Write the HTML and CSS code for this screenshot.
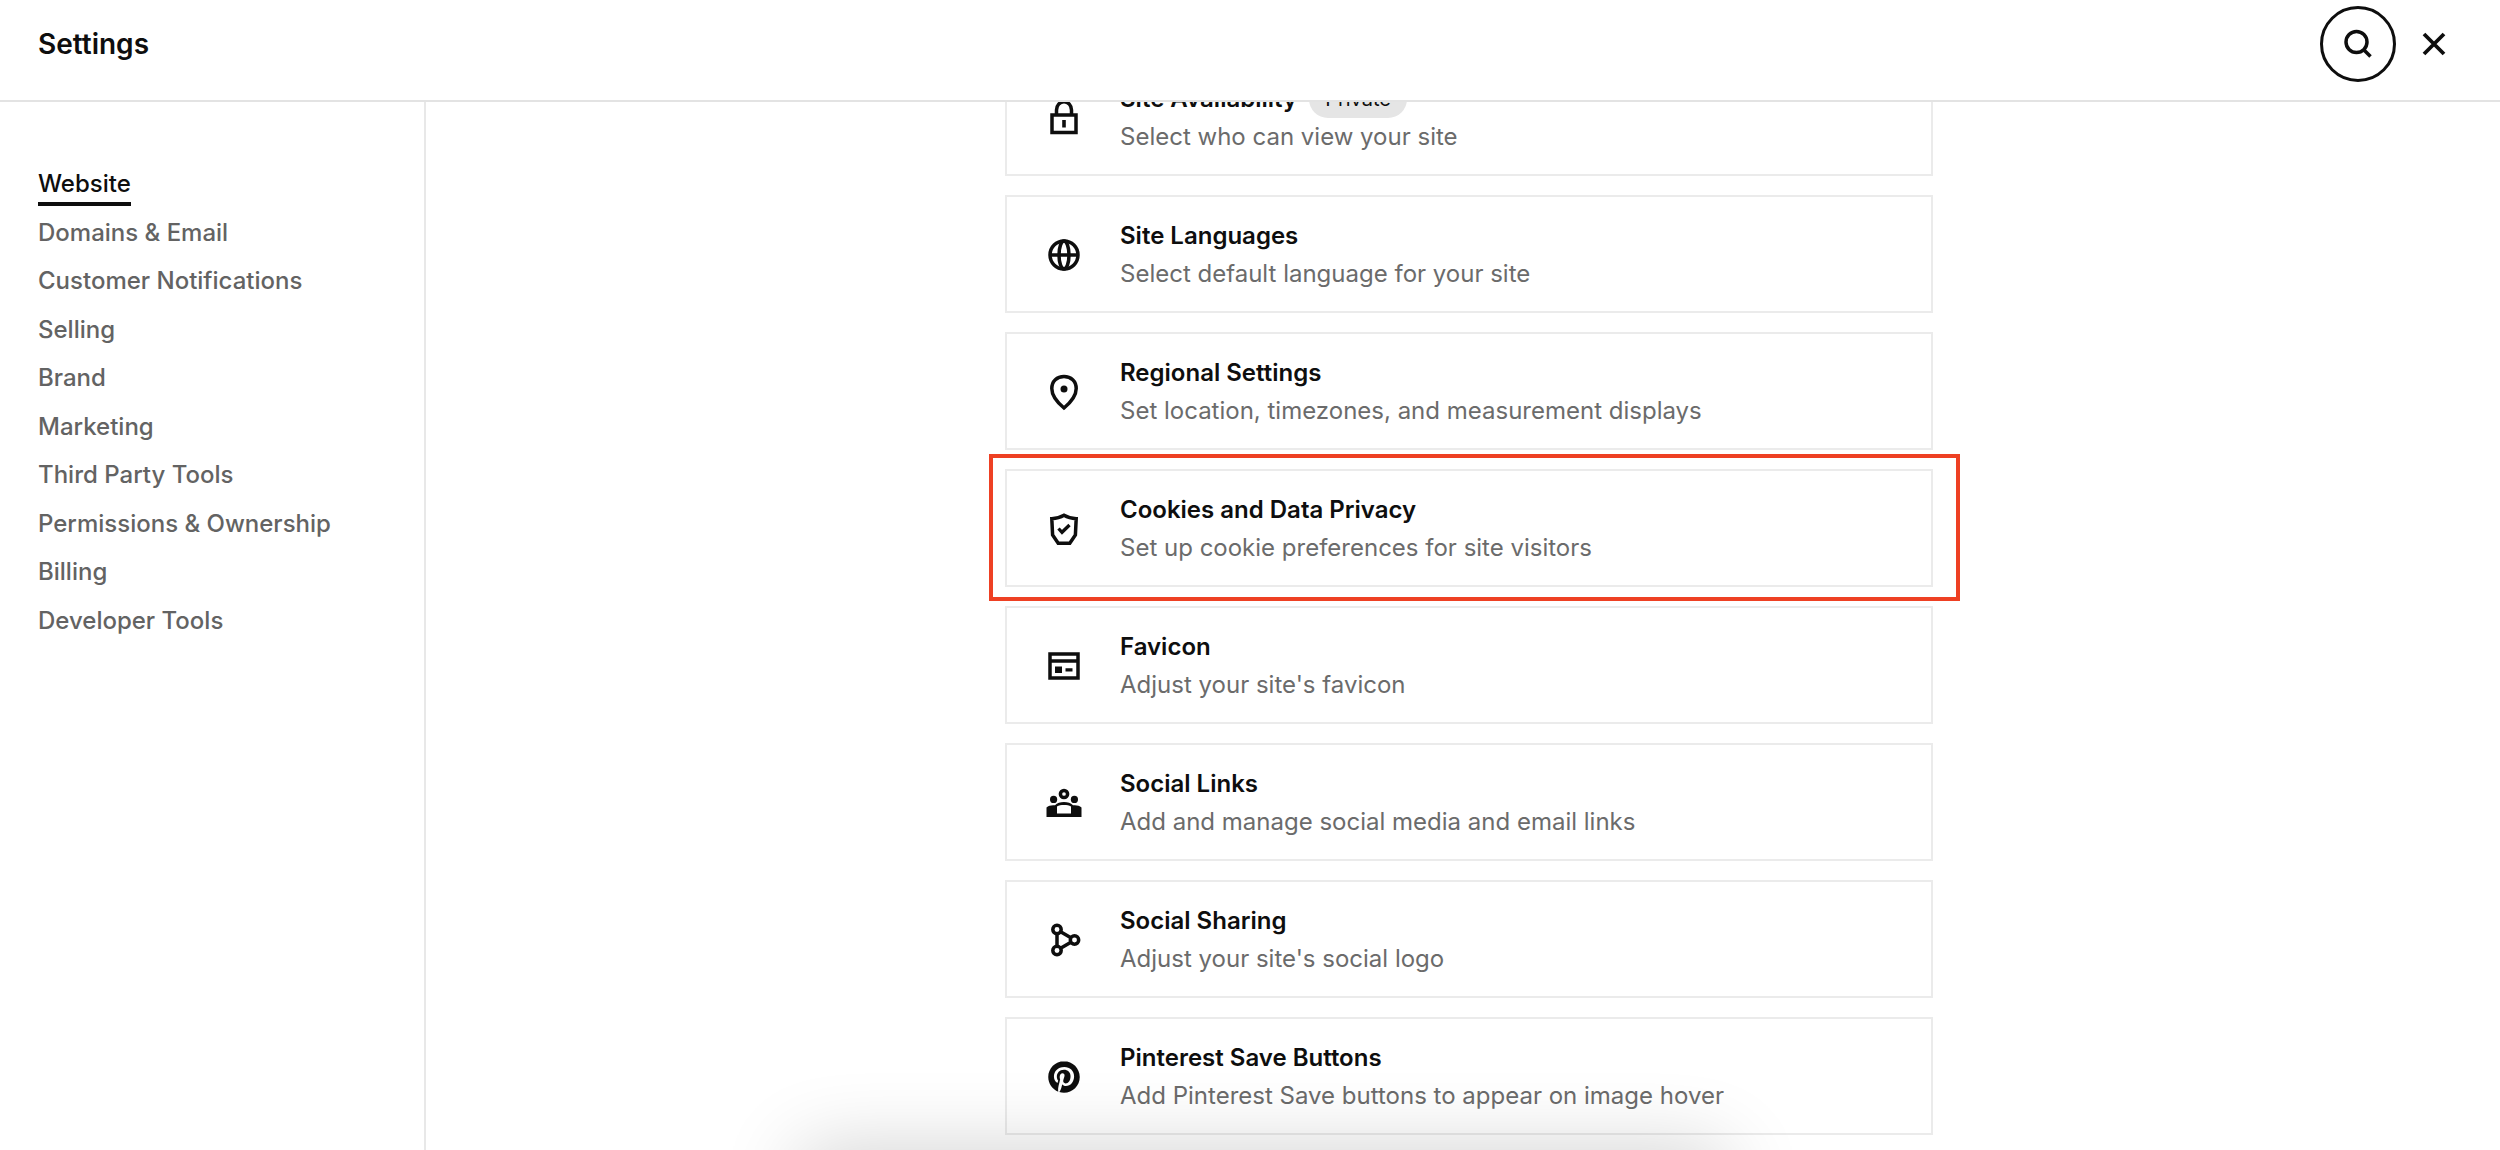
FILE: index.html
```html
<!DOCTYPE html>
<html lang="en">
<head>
    <meta charset="UTF-8">
    <meta name="viewport" content="width=device-width, initial-scale=1.0">
    <title>Settings</title>
    <link rel="stylesheet" href="styles.css">
</head>
<body>
    <header class="header">
        <h1 class="header-title">Settings</h1>
        <div class="header-actions">
            <button class="search-btn" type="button" aria-label="Search">
                <svg class="icon" viewBox="0 0 40 40" aria-hidden="true">
                    <circle cx="18.5" cy="18" r="10.5" fill="none" stroke="currentColor" stroke-width="3.5"/>
                    <path d="M25.5 25.5l7 7" fill="none" stroke="currentColor" stroke-width="3.5"/>
                </svg>
            </button>
            <button class="close-btn" type="button" aria-label="Close">
                <svg class="icon" viewBox="0 0 40 40" aria-hidden="true">
                    <path d="M10 10l20 20M30 10L10 30" fill="none" stroke="currentColor" stroke-width="3.8"/>
                </svg>
            </button>
        </div>
    </header>

    <div class="layout">
        <nav class="sidebar">
            <ul class="nav-list">
                <li><a class="nav-link active" href="#">Website</a></li>
                <li><a class="nav-link" href="#">Domains &amp; Email</a></li>
                <li><a class="nav-link" href="#">Customer Notifications</a></li>
                <li><a class="nav-link" href="#">Selling</a></li>
                <li><a class="nav-link" href="#">Brand</a></li>
                <li><a class="nav-link" href="#">Marketing</a></li>
                <li><a class="nav-link" href="#">Third Party Tools</a></li>
                <li><a class="nav-link" href="#">Permissions &amp; Ownership</a></li>
                <li><a class="nav-link" href="#">Billing</a></li>
                <li><a class="nav-link" href="#">Developer Tools</a></li>
            </ul>
        </nav>

        <main class="content">
            <div class="cards">
                <a class="card" href="#">
                    <svg class="icon" viewBox="0 0 40 40" aria-hidden="true">
                        <path d="M8 17h24v17.500H8zM12.500 17v-5a7.300 8 0 0 1 15 0v5" fill="none" stroke="currentColor" stroke-width="3.500"/>
                        <path d="M18.200 22h3.600v7.500h-3.600z" fill="currentColor"/>
                    </svg>
                    <div class="card-text">
                        <h2 class="card-title">Site Availability <span class="badge">Private</span></h2>
                        <p class="card-desc">Select who can view your site</p>
                    </div>
                </a>

                <a class="card" href="#">
                    <svg class="icon" viewBox="0 0 40 40" aria-hidden="true">
                        <g fill="none" stroke="currentColor" stroke-width="3.500">
                            <circle cx="20" cy="20" r="14"/>
                            <ellipse cx="20" cy="20" rx="5" ry="14"/>
                            <path d="M6 20h28"/>
                        </g>
                    </svg>
                    <div class="card-text">
                        <h2 class="card-title">Site Languages</h2>
                        <p class="card-desc">Select default language for your site</p>
                    </div>
                </a>

                <a class="card" href="#">
                    <svg class="icon" viewBox="0 0 40 40" aria-hidden="true">
                        <path d="M20 36c-3-2.500-12.200-11-12.200-19.500C7.800 9 13 4.500 20 4.500S32.200 9 32.200 16.500C32.200 25 23 33.500 20 36z" fill="none" stroke="currentColor" stroke-width="3.500"/>
                        <circle cx="20" cy="17" r="3.500" fill="currentColor"/>
                    </svg>
                    <div class="card-text">
                        <h2 class="card-title">Regional Settings</h2>
                        <p class="card-desc">Set location, timezones, and measurement displays</p>
                    </div>
                </a>

                <a class="card highlighted" href="#">
                    <svg class="icon" viewBox="0 0 40 40" aria-hidden="true">
                        <path d="M20 6.200c3 1.800 7 3.200 12.200 3.500L31.400 26l-5.600 8.200H14.200L8.600 26 7.800 9.700C13 9.400 17 8 20 6.200z" fill="none" stroke="currentColor" stroke-width="3.500"/>
                        <path d="M14.500 19.500l3.500 3.800 7.500-7.300" fill="none" stroke="currentColor" stroke-width="3.300"/>
                    </svg>
                    <div class="card-text">
                        <h2 class="card-title">Cookies and Data Privacy</h2>
                        <p class="card-desc">Set up cookie preferences for site visitors</p>
                    </div>
                </a>

                <a class="card" href="#">
                    <svg class="icon" viewBox="0 0 40 40" aria-hidden="true">
                        <path d="M6 8h28v24H6zM6 15h28" fill="none" stroke="currentColor" stroke-width="3.500"/>
                        <path d="M11 20.500h7v6.500h-7zM21.500 22.200h7v3.200h-7z" fill="currentColor"/>
                    </svg>
                    <div class="card-text">
                        <h2 class="card-title">Favicon</h2>
                        <p class="card-desc">Adjust your site's favicon</p>
                    </div>
                </a>

                <a class="card" href="#">
                    <svg class="icon" viewBox="0 0 40 40" aria-hidden="true">
                        <circle cx="20" cy="11" r="3.600" fill="none" stroke="currentColor" stroke-width="3.500"/>
                        <circle cx="9.600" cy="16.400" r="3.600" fill="currentColor"/>
                        <circle cx="30.400" cy="16.400" r="3.600" fill="currentColor"/>
                        <path d="M2.500 34V24.500c2-1.800 5-2.600 8.500-2.200 2.200-2.200 5.300-3.300 9-3.300s6.800 1.100 9 3.300c3.500-.4 6.500.4 8.500 2.200V34zM13 30.500h14v-7c-1.800-.9-4.200-1.400-7-1.400s-5.200.5-7 1.400z" fill="currentColor" fill-rule="evenodd"/>
                    </svg>
                    <div class="card-text">
                        <h2 class="card-title">Social Links</h2>
                        <p class="card-desc">Add and manage social media and email links</p>
                    </div>
                </a>

                <a class="card" href="#">
                    <svg class="icon" viewBox="0 0 40 40" aria-hidden="true">
                        <g fill="none" stroke="currentColor" stroke-width="3.500">
                            <circle cx="13" cy="9.500" r="4.200"/>
                            <circle cx="30.500" cy="20" r="4.200"/>
                            <circle cx="13" cy="30.500" r="4.200"/>
                            <path d="M13 13.700v12.600M16.600 11.700l10.300 6.100M16.600 28.300l10.300-6.100"/>
                        </g>
                    </svg>
                    <div class="card-text">
                        <h2 class="card-title">Social Sharing</h2>
                        <p class="card-desc">Adjust your site's social logo</p>
                    </div>
                </a>

                <a class="card" href="#">
                    <svg class="icon" viewBox="-3.200 -3.200 30.400 30.400" aria-hidden="true">
                        <path fill="currentColor" d="M12.017 0C5.396 0 .029 5.367.029 11.987c0 5.079 3.158 9.417 7.618 11.162-.105-.949-.199-2.403.041-3.439.219-.937 1.406-5.957 1.406-5.957s-.359-.72-.359-1.781c0-1.663.967-2.911 2.168-2.911 1.024 0 1.518.769 1.518 1.688 0 1.029-.653 2.567-.992 3.992-.285 1.193.6 2.165 1.775 2.165 2.128 0 3.768-2.245 3.768-5.487 0-2.861-2.063-4.869-5.008-4.869-3.410 0-5.409 2.562-5.409 5.199 0 1.033.394 2.143.889 2.741.099.12.112.225.085.345-.09.375-.293 1.199-.334 1.363-.053.225-.172.271-.401.165-1.495-.69-2.433-2.878-2.433-4.646 0-3.776 2.748-7.252 7.920-7.252 4.158 0 7.392 2.967 7.392 6.923 0 4.135-2.607 7.462-6.233 7.462-1.214 0-2.354-.629-2.758-1.379l-.749 2.848c-.269 1.045-1.004 2.352-1.498 3.146 1.123.345 2.306.535 3.550.535 6.607 0 11.985-5.365 11.985-11.987C23.970 5.390 18.592.026 11.985.026z"/>
                    </svg>
                    <div class="card-text">
                        <h2 class="card-title">Pinterest Save Buttons</h2>
                        <p class="card-desc">Add Pinterest Save buttons to appear on image hover</p>
                    </div>
                </a>
            </div>
        </main>
    </div>

    <div class="bottom-shadow"></div>
</body>
</html>
```
FILE: styles.css
```css
* {
    margin: 0;
    padding: 0;
    box-sizing: border-box;
}

body {
    display: flex;
    flex-direction: column;
    height: 100vh;
    overflow: hidden;
    background-color: #fff;
    color: #0e0e0e;
    font-family: Inter, 'Liberation Sans', sans-serif;
    font-size: 24px;
}

a {
    color: inherit;
    text-decoration: none;
}

button {
    display: flex;
    align-items: center;
    justify-content: center;
    background: none;
    border: none;
    color: inherit;
    cursor: pointer;
}

.icon {
    flex: none;
    width: 40px;
    height: 40px;
}

/* Header */
.header {
    display: flex;
    flex: none;
    align-items: flex-start;
    justify-content: space-between;
    padding: 6px 46px 18px 38px;
    border-bottom: 2px solid #e3e3e3;
}

.header-title {
    font-size: 28px;
    font-weight: 600;
    line-height: 76px;
}

.header-actions {
    display: flex;
    align-items: center;
    gap: 18px;
}

.search-btn {
    width: 76px;
    height: 76px;
    border: 3px solid #0e0e0e;
    border-radius: 50%;
}

/* Sidebar */
.layout {
    display: flex;
    flex: 1;
    min-height: 0;
}

.sidebar {
    flex: none;
    width: 426px;
    padding: 64px 38px;
    border-right: 2px solid #e8e8e8;
}

.nav-list {
    display: grid;
    grid-auto-rows: 1fr;
    height: 485px;
    list-style: none;
}

.nav-link {
    display: inline-block;
    color: #636363;
    font-weight: 500;
    line-height: 36px;
}

.nav-link.active {
    border-bottom: 4px solid #0e0e0e;
    color: #0e0e0e;
}

/* Setting cards, scrolled a little under the header */
.content {
    flex: 1;
    overflow: hidden;
    padding-left: 12px;
}

.cards {
    display: flex;
    flex-direction: column;
    gap: 19px;
    max-width: 928px;
    margin: -44px auto 0;
}

.card {
    position: relative;
    display: flex;
    align-items: center;
    gap: 36px;
    padding: 20px 37px 18px;
    border: 2px solid #ebebeb;
}

.card-title {
    display: flex;
    align-items: center;
    gap: 12px;
    font-size: 24px;
    font-weight: 600;
    line-height: 38px;
}

.card-desc {
    color: #6b6b6b;
    line-height: 38px;
}

.badge {
    padding: 0 16px;
    border-radius: 19px;
    background-color: #e5e5e5;
    font-size: 20px;
    font-weight: 400;
}

.card.highlighted::after {
    content: '';
    position: absolute;
    inset: -17px -29px -16px -18px;
    border: 4px solid #ee4023;
}

/* Shadow of the panel that sits below the window */
.bottom-shadow {
    position: fixed;
    top: 100%;
    left: 32%;
    right: 31%;
    height: 80px;
    box-shadow: 0 0 80px rgba(0, 0, 0, 0.19);
    pointer-events: none;
}
```
